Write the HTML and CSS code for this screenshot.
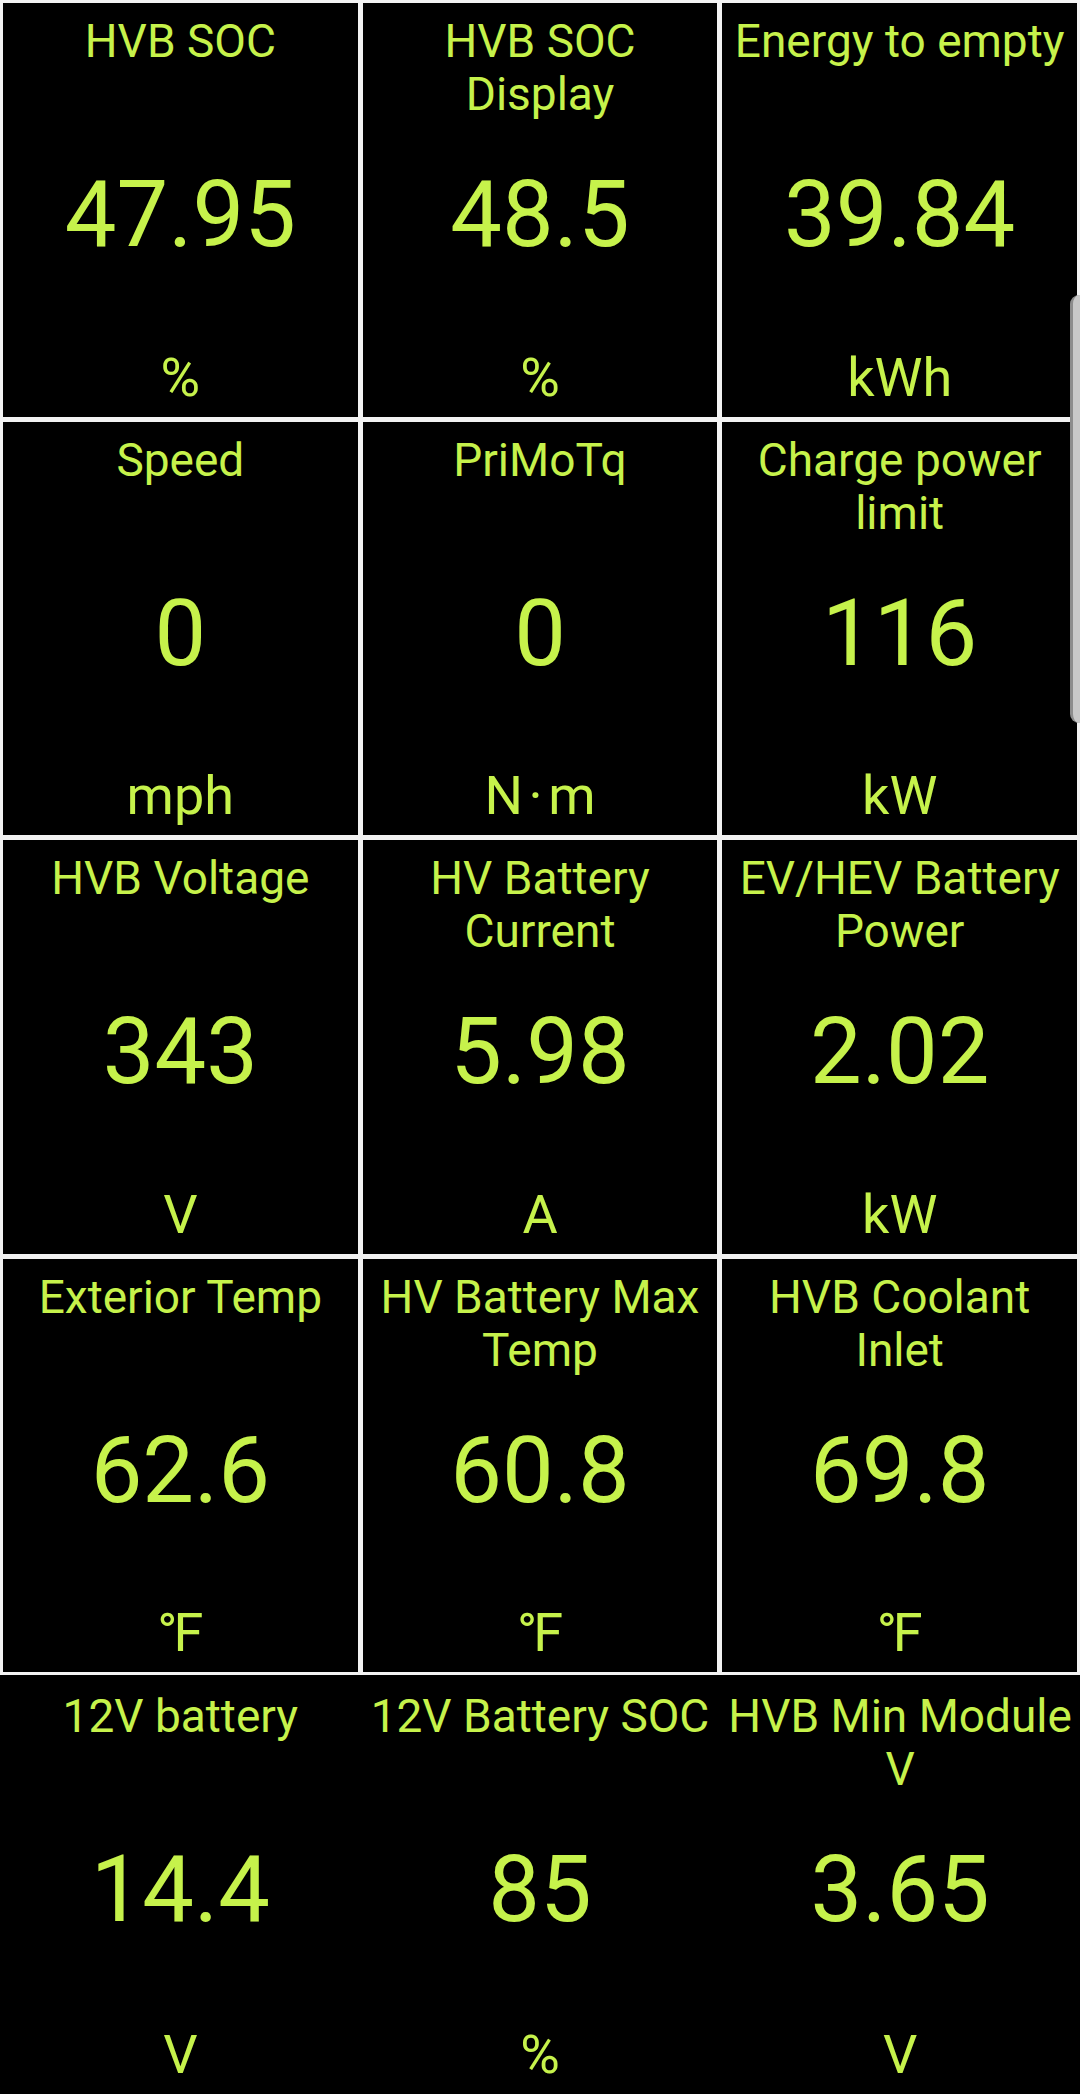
FILE: index.html
```html
<!DOCTYPE html>
<html lang="en">
<head>
<meta charset="utf-8">
<title>Dashboard</title>
<link rel="stylesheet" href="styles.css">
</head>
<body>
<div class="grid">
  <div class="cell"><div class="title">HVB SOC</div><div class="value">47.95</div><div class="unit">%</div></div>
  <div class="cell"><div class="title">HVB SOC Display</div><div class="value">48.5</div><div class="unit">%</div></div>
  <div class="cell"><div class="title">Energy to empty</div><div class="value">39.84</div><div class="unit">kWh</div></div>

  <div class="cell"><div class="title">Speed</div><div class="value">0</div><div class="unit">mph</div></div>
  <div class="cell"><div class="title">PriMoTq</div><div class="value">0</div><div class="unit">N&#8202;&middot;&#8202;m</div></div>
  <div class="cell"><div class="title">Charge power limit</div><div class="value">116</div><div class="unit">kW</div></div>

  <div class="cell"><div class="title">HVB Voltage</div><div class="value">343</div><div class="unit">V</div></div>
  <div class="cell"><div class="title">HV Battery Current</div><div class="value">5.98</div><div class="unit">A</div></div>
  <div class="cell"><div class="title">EV/HEV Battery Power</div><div class="value">2.02</div><div class="unit">kW</div></div>

  <div class="cell"><div class="title">Exterior Temp</div><div class="value">62.6</div><div class="unit"><span class="deg">&deg;</span>F</div></div>
  <div class="cell"><div class="title">HV Battery Max Temp</div><div class="value">60.8</div><div class="unit"><span class="deg">&deg;</span>F</div></div>
  <div class="cell"><div class="title">HVB Coolant Inlet</div><div class="value">69.8</div><div class="unit"><span class="deg">&deg;</span>F</div></div>
</div>
<div class="lastrow">
  <div class="cell last"><div class="title">12V battery</div><div class="value">14.4</div><div class="unit">V</div></div>
  <div class="cell last"><div class="title">12V Battery SOC</div><div class="value">85</div><div class="unit">%</div></div>
  <div class="cell last"><div class="title">HVB&nbsp;Min&nbsp;Module V</div><div class="value">3.65</div><div class="unit">V</div></div>
</div>
<div class="scrollbar"></div>
</body>
</html>
```

FILE: styles.css
```css
html, body {
  margin: 0;
  padding: 0;
  background: #000;
}
body {
  width: 1080px;
  height: 2094px;
  overflow: hidden;
  position: relative;
  font-family: Roboto, "Noto Sans", "Liberation Sans", sans-serif;
  color: #c6f24b;
}
.grid {
  display: grid;
  grid-template-columns: repeat(3, 1fr);
  grid-template-rows: repeat(4, 413.5px);
  gap: 5px;
  padding: 3px 3px 2.5px 3px;
  background: #f2f2f2;
}
.lastrow {
  display: grid;
  grid-template-columns: repeat(3, 1fr);
  column-gap: 5px;
  padding: 0 3px;
  height: 419.5px;
  background: #000;
}
.cell {
  background: #000;
  display: grid;
  grid-template-rows: 118px 1fr 107px;
  text-align: center;
  min-width: 0;
}
.title {
  font-size: 46px;
  line-height: 53px;
  padding: 12px 6px 0;
}
.last .title {
  padding-top: 15px;
}
.value {
  font-size: 92px;
  line-height: 110px;
  align-self: center;
}
.unit {
  font-size: 54px;
  line-height: 63px;
  align-self: end;
  padding-bottom: 8px;
}
.deg {
  margin-right: -4px;
}
.scrollbar {
  position: absolute;
  right: 0;
  top: 295px;
  width: 7px;
  height: 428px;
  background: #c8c8c8;
  border-left: 3px solid #8c8c8c;
  border-radius: 9px 0 0 9px;
}
```
